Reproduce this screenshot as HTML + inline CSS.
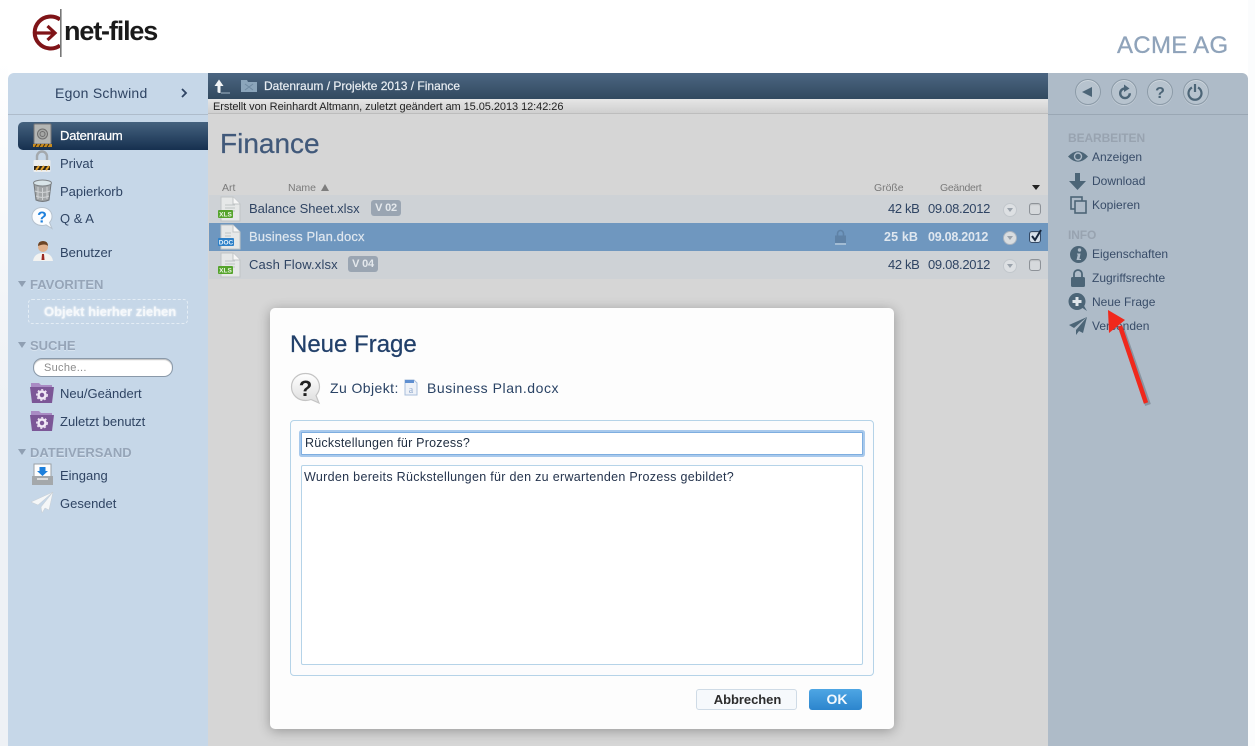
<!DOCTYPE html>
<html><head><meta charset="utf-8"><style>
html,body{margin:0;padding:0;width:1255px;height:746px;overflow:hidden;background:#fff;font-family:"Liberation Sans",sans-serif;}
div,span,svg{position:absolute;}
.t{white-space:nowrap;color:#2f4463;font-size:13px;line-height:16px;}
.h{white-space:nowrap;color:#96a5b8;font-size:13px;font-weight:bold;line-height:16px;text-shadow:0 1px 0 rgba(255,255,255,.3);}
.r{white-space:nowrap;color:#384c68;font-size:12px;line-height:14px;}
.rh{white-space:nowrap;color:#98a3b0;font-size:12px;font-weight:bold;line-height:14px;letter-spacing:-.1px;}
.row{left:209px;width:839px;height:28px;background:#ced2d6;}
.tri{width:0;height:0;border-left:4px solid transparent;border-right:4px solid transparent;border-top:6px solid #8f9fb2;left:18px;}
.cb{left:1029px;width:10px;height:10px;border:1px solid #8d9298;border-radius:3px;background:#d6d9dc;box-shadow:inset 0 1px 1px rgba(0,0,0,.12);}
.rd{left:1003px;width:12px;height:12px;border-radius:50%;background:#dde0e3;border:1px solid #c2c7cc;}
.rd:after{content:"";position:absolute;left:3px;top:4px;border-left:3px solid transparent;border-right:3px solid transparent;border-top:4px solid #9aa2ab;}
.cir{top:79px;width:24px;height:24px;border-radius:50%;background:#b7c3ce;border:1px solid #8b9aa7;box-shadow:inset 0 1px 0 rgba(255,255,255,.35),0 1px 0 rgba(255,255,255,.25);}
.lab{white-space:nowrap;font-size:10.500px;line-height:12px;color:#7a7a7a;top:182px;}
.ver{height:16px;background:#9aa5b2;border-radius:3px;color:#e4e8ec;font-size:11px;font-weight:bold;line-height:17px;text-align:center;white-space:nowrap;letter-spacing:-.2px;}
</style></head><body>

<!-- logo -->
<svg style="left:30px;top:8px" width="40" height="52" viewBox="0 0 40 52">
<path d="M30 11.500A16 16 0 1 0 30 37.500" fill="none" stroke="#7f1418" stroke-width="4"/>
<path d="M5 25H24M17.500 18L25 25L17.500 32" fill="none" stroke="#7f1418" stroke-width="3.200"/>
<rect x="30" y="1" width="1.600" height="48" fill="#777"/>
</svg>
<div style="left:64px;top:14px;font-size:27px;line-height:34px;font-weight:bold;color:#1a1a1a;letter-spacing:-1.150px;white-space:nowrap">net-files</div>
<div style="left:1117px;top:32px;font-size:24px;line-height:28px;color:#8fa3ba;white-space:nowrap;letter-spacing:.3px;-webkit-text-stroke:.3px #8fa3ba">ACME AG</div>

<!-- panels -->
<div style="left:8px;top:73px;width:200px;height:673px;background:#c6d7e8;border-top-left-radius:6px"></div>
<div style="left:8px;top:114px;width:200px;height:1px;background:#aebccb"></div>
<div style="left:208px;top:99px;width:840px;height:647px;background:#d6d6d6"></div>
<div style="left:1048px;top:73px;width:200px;height:673px;background:#aebbc8;border-top-right-radius:6px"></div>
<div style="left:1048px;top:114px;width:200px;height:1px;background:#9aa7b4"></div>
<div style="left:208px;top:73px;width:840px;height:26px;background:linear-gradient(#4c6682,#32495f)"></div>
<div style="left:208px;top:99px;width:840px;height:15px;background:linear-gradient(#e6e6e6,#cfcfcf);border-bottom:1px solid #bdbdbd;box-sizing:border-box"></div>

<!-- path bar -->
<svg style="left:213px;top:78px" width="18" height="17" viewBox="0 0 18 17"><path d="M16 15H7.500V8H10.500L6 1.500L1.500 8H4.500V14Q5 15 7.500 15" fill="#f2f4f6"/><path d="M8 15H17" stroke="#7e93a6" stroke-width="1.500"/></svg>
<svg style="left:241px;top:79px" width="17" height="14" viewBox="0 0 17 14"><path d="M0 1H6L7 3H16V13H0Z" fill="#8ba5bb"/><path d="M4 5L12 11M12 5L4 11" stroke="#6f8aa2"/></svg>
<div class="t" style="left:264px;top:78px;color:#e9eef3;font-size:12px;-webkit-text-stroke:.2px #e9eef3">Datenraum / Projekte 2013 / Finance</div>
<div class="t" style="left:213px;top:100px;color:#222;font-size:11px;line-height:15px;letter-spacing:-.06px">Erstellt von Reinhardt Altmann, zuletzt geändert am 15.05.2013 12:42:26</div>

<!-- left -->
<div class="t" style="left:55px;top:85px;font-size:14px;color:#2f4463;letter-spacing:.25px">Egon Schwind</div>
<svg style="left:180px;top:88px" width="8" height="10" viewBox="0 0 8 10"><path d="M2 1L6 5L2 9" fill="none" stroke="#2f4463" stroke-width="1.800"/></svg>

<div style="left:18px;top:122px;width:190px;height:28px;border-radius:5px 0 0 5px;background:linear-gradient(#45627f,#16304f)"></div>
<svg style="left:33px;top:123px" width="19" height="26" viewBox="0 0 19 26"><rect x="1" y="1" width="17" height="20" rx="1" fill="#b4b6b4" stroke="#777"/><circle cx="9.500" cy="11" r="5" fill="#a5a7a5" stroke="#6e6e6e"/><circle cx="9.500" cy="11" r="2.500" fill="none" stroke="#6e6e6e"/><rect x="0" y="21" width="19" height="3" fill="#c98c1e"/><path d="M2 24L4 21M6 24L8 21M10 24L12 21M14 24L16 21" stroke="#33281a"/></svg>
<div class="t" style="left:60px;top:128px;color:#fff;font-size:13px;letter-spacing:-.2px;-webkit-text-stroke:.25px #fff">Datenraum</div>

<svg style="left:32px;top:150px" width="20" height="24" viewBox="0 0 20 24"><path d="M5 11V6.500a5 5 0 0 1 10 0V11" fill="none" stroke="#a4a9ad" stroke-width="2.400"/><rect x="1.500" y="10" width="17" height="12" rx="1" fill="#eceded"/><rect x="2" y="16" width="16" height="4" fill="#2b2318"/><path d="M4 20L7 16M9 20L12 16M14 20L17 16" stroke="#e2a02a" stroke-width="2"/></svg>
<div class="t" style="left:60px;top:156px">Privat</div>

<svg style="left:32px;top:179px" width="21" height="24" viewBox="0 0 21 24"><path d="M2 5L4 21Q10.500 24 17 21L19 5Q10.500 9 2 5Z" fill="#a2a6a8" stroke="#73777a"/><path d="M6 8V20M10.500 9V21M15 8V20M3 12Q10.500 15 18 12M4 17Q10.500 20 17 17" stroke="#d0d3d5" fill="none"/><ellipse cx="10.500" cy="4" rx="9" ry="3" fill="#d8e4e8" stroke="#7f8488"/></svg>
<div class="t" style="left:60px;top:184px">Papierkorb</div>

<svg style="left:31px;top:206px" width="23" height="24" viewBox="0 0 23 24"><path d="M11 1.500C5 1.500 1 5.500 1 10.500C1 16 5.500 19.500 11 19.500C12.500 19.500 14 19.200 15 18.800L21 22.500L18.500 16.500C20 15 21 13 21 10.500C21 5.500 17 1.500 11 1.500Z" fill="#fbfdff" stroke="#b6c2ce"/><text x="11" y="16.500" font-family="Liberation Sans" font-size="16" font-weight="bold" fill="#1c7fdc" text-anchor="middle">?</text></svg>
<div class="t" style="left:60px;top:211px">Q &amp; A</div>

<svg style="left:32px;top:239px" width="22" height="24" viewBox="0 0 22 24"><path d="M1 22Q2 15 9 14H13Q20 15 21 22Z" fill="#f3f3f1"/><path d="M10 15H12L12.500 21H9.500Z" fill="#9b2a24"/><circle cx="11" cy="8" r="5" fill="#e0b18d"/><path d="M6 7Q6 2 11 2Q16 2 16 7Q13 4 6 7Z" fill="#6c4526"/></svg>
<div class="t" style="left:60px;top:245px">Benutzer</div>

<div class="tri" style="top:281px"></div>
<div class="h" style="left:30px;top:277px">FAVORITEN</div>
<div style="left:28px;top:299px;width:158px;height:23px;border:1px dashed #e4edf5;border-radius:4px"></div>
<div class="t" style="left:44px;top:304px;color:#f5f8fb;font-weight:bold;text-shadow:0 0 2px #fff">Objekt hierher ziehen</div>

<div class="tri" style="top:342px"></div>
<div class="h" style="left:30px;top:338px">SUCHE</div>
<div style="left:33px;top:358px;width:138px;height:17px;border:1px solid #8a99a9;border-radius:9px;background:#fff;box-shadow:inset 0 1px 1px #bbb"></div>
<div class="t" style="left:44px;top:360px;color:#8c8c8c;font-size:11px;letter-spacing:.3px">Suche...</div>

<svg style="left:30px;top:381px" width="24" height="23" viewBox="0 0 24 23"><path d="M1 2H9L11 4H22V8H1Z" fill="#a98bc4"/><path d="M0 6H24L22 22H2Z" fill="#7c5797"/><circle cx="12" cy="14" r="3.500" fill="none" stroke="#f1e9f6" stroke-width="2.500"/><circle cx="12" cy="14" r="5.300" fill="none" stroke="#f1e9f6" stroke-width="1.200" stroke-dasharray="2 2"/></svg>
<div class="t" style="left:60px;top:386px">Neu/Geändert</div>
<svg style="left:30px;top:409px" width="24" height="23" viewBox="0 0 24 23"><path d="M1 2H9L11 4H22V8H1Z" fill="#a98bc4"/><path d="M0 6H24L22 22H2Z" fill="#7c5797"/><circle cx="12" cy="14" r="3.500" fill="none" stroke="#f1e9f6" stroke-width="2.500"/><circle cx="12" cy="14" r="5.300" fill="none" stroke="#f1e9f6" stroke-width="1.200" stroke-dasharray="2 2"/></svg>
<div class="t" style="left:60px;top:414px">Zuletzt benutzt</div>

<div class="tri" style="top:449px"></div>
<div class="h" style="left:30px;top:445px">DATEIVERSAND</div>
<svg style="left:32px;top:463px" width="21" height="23" viewBox="0 0 21 23"><rect x="2" y="1" width="17" height="14" fill="#fdfdfd" stroke="#9ba1a6"/><path d="M7.500 4H13.500V8H16L10.500 13L5 8H7.500Z" fill="#1c7fdc"/><path d="M0 13H21V22H0Z" fill="#a4a8ab"/><path d="M5 16H16" stroke="#dcdcdc" stroke-width="2"/></svg>
<div class="t" style="left:60px;top:468px">Eingang</div>
<svg style="left:31px;top:491px" width="23" height="23" viewBox="0 0 23 23"><path d="M22 1L0 11L7 14L22 1L10 16L11 22L14 17L18 19Z" fill="#f5f7f8" stroke="#c8ced3" stroke-width=".5"/></svg>
<div class="t" style="left:60px;top:496px">Gesendet</div>

<!-- center -->
<div style="left:220px;top:127px;font-size:28px;line-height:34px;color:#41597a;white-space:nowrap;-webkit-text-stroke:.25px #41597a">Finance</div>
<div class="lab" style="left:222px">Art</div>
<div class="lab" style="left:288px">Name</div>
<div style="left:321px;top:184px;width:0;height:0;border-left:4px solid transparent;border-right:4px solid transparent;border-bottom:7px solid #7d7d7d"></div>
<div class="lab" style="left:874px;letter-spacing:-.05px">Größe</div>
<div class="lab" style="left:940px;letter-spacing:-.3px">Geändert</div>
<div style="left:1032px;top:185px;width:0;height:0;border-left:4.500px solid transparent;border-right:4.500px solid transparent;border-top:5px solid #222"></div>

<div class="row" style="top:195px"></div>
<div class="row" style="top:223px;background:#6f97bf"></div>
<div class="row" style="top:251px"></div>

<svg style="left:217px;top:196px" width="24" height="26" viewBox="0 0 24 26"><path d="M4 1H16L23 8V25H4Z" fill="#e6e8e8" stroke="#c0c4c6"/><path d="M16 1V8H23" fill="#f7f7f7" stroke="#c0c4c6"/><path d="M8 9H18M8 12H18M8 15H18" stroke="#bfc3c5"/><rect x="1" y="14" width="15" height="8" rx="1" fill="#55a42c"/><text x="8.500" y="20.500" font-family="Liberation Sans" font-size="6.500" font-weight="bold" fill="#eef7e6" text-anchor="middle">XLS</text></svg>
<svg style="left:217px;top:224px" width="24" height="26" viewBox="0 0 24 26"><path d="M4 1H16L23 8V25H4Z" fill="#e6e8e8" stroke="#c0c4c6"/><path d="M16 1V8H23" fill="#f7f7f7" stroke="#c0c4c6"/><path d="M8 9H14M8 12H14" stroke="#bfc3c5"/><rect x="1" y="14" width="16" height="8" rx="1" fill="#2d80c8"/><text x="9" y="20.500" font-family="Liberation Sans" font-size="6.500" font-weight="bold" fill="#e8f3fb" text-anchor="middle">DOC</text></svg>
<svg style="left:217px;top:252px" width="24" height="26" viewBox="0 0 24 26"><path d="M4 1H16L23 8V25H4Z" fill="#e6e8e8" stroke="#c0c4c6"/><path d="M16 1V8H23" fill="#f7f7f7" stroke="#c0c4c6"/><path d="M8 9H18M8 12H18M8 15H18" stroke="#bfc3c5"/><rect x="1" y="14" width="15" height="8" rx="1" fill="#55a42c"/><text x="8.500" y="20.500" font-family="Liberation Sans" font-size="6.500" font-weight="bold" fill="#eef7e6" text-anchor="middle">XLS</text></svg>

<div class="t" style="left:249px;top:201px">Balance Sheet.xlsx</div>
<div class="ver" style="left:371px;top:200px;width:30px">V 02</div>
<div class="t" style="left:249px;top:229px;color:#dfe7ef;letter-spacing:.12px;-webkit-text-stroke:.2px #dfe7ef">Business Plan.docx</div>
<div class="t" style="left:249px;top:257px;letter-spacing:.15px">Cash Flow.xlsx</div>
<div class="ver" style="left:348px;top:256px;width:30px">V 04</div>

<svg style="left:834px;top:229px" width="13" height="16" viewBox="0 0 13 16"><path d="M3.500 7V4.500a3 3 0 0 1 6 0V7" fill="none" stroke="#5f82a6" stroke-width="1.600"/><rect x="1" y="6.500" width="11" height="7.500" fill="#5f82a6"/><rect x="1" y="14.500" width="11" height="1" fill="#d5e0ea"/></svg>

<div class="t" style="left:888px;top:201px;letter-spacing:-.35px">42 kB</div>
<div class="t" style="left:928px;top:201px;letter-spacing:-.3px">09.08.2012</div>
<div class="t" style="left:884px;top:229px;color:#dfe7ef;font-weight:bold;font-size:12.500px;letter-spacing:.15px">25 kB</div>
<div class="t" style="left:928px;top:229px;color:#dfe7ef;font-weight:bold;font-size:12.500px;letter-spacing:-.25px">09.08.2012</div>
<div class="t" style="left:888px;top:257px;letter-spacing:-.35px">42 kB</div>
<div class="t" style="left:928px;top:257px;letter-spacing:-.3px">09.08.2012</div>

<div class="rd" style="top:203px"></div>
<div class="rd" style="top:231px;background:#d9dde0;border-color:#aab4bf"></div>
<div class="rd" style="top:259px"></div>
<div class="cb" style="top:203px"></div>
<div class="cb" style="top:231px;background:#d8e2ec;border-color:#344a66"></div>
<div class="cb" style="top:259px"></div>
<svg style="left:1029px;top:228px" width="15" height="15" viewBox="0 0 15 15"><path d="M3 8L6 12L12 2" fill="none" stroke="#16263c" stroke-width="2"/></svg>

<!-- right -->
<div class="cir" style="left:1075px"></div>
<div class="cir" style="left:1111px"></div>
<div class="cir" style="left:1147px"></div>
<div class="cir" style="left:1183px"></div>
<svg style="left:1075px;top:79px" width="136" height="26" viewBox="0 0 136 26">
<path d="M7 13L17 8V18Z" fill="#4c6577"/>
<path d="M50 9.500a4.800 4.800 0 1 0 4.800 4.800" fill="none" stroke="#4c6577" stroke-width="2.400"/><path d="M49 5.500L54.500 9.500L49 13Z" fill="#4c6577"/>
<text x="85" y="19" font-family="Liberation Sans" font-size="16" font-weight="bold" fill="#4c6577" text-anchor="middle">?</text>
<path d="M117 8.500a6.500 6.500 0 1 0 6 0" fill="none" stroke="#4c6577" stroke-width="2.200"/><path d="M120 5V13" stroke="#4c6577" stroke-width="2.200"/>
</svg>

<div class="rh" style="left:1068px;top:131px">BEARBEITEN</div>
<svg style="left:1068px;top:149px" width="20" height="15" viewBox="0 0 20 15"><path d="M0 7.500Q10 -3 20 7.500Q10 18 0 7.500Z" fill="#4c6577"/><circle cx="10" cy="7.500" r="4.200" fill="#aebbc8"/><circle cx="10" cy="7.500" r="2.800" fill="#4c6577"/></svg>
<div class="r" style="left:1092px;top:150px">Anzeigen</div>
<svg style="left:1069px;top:173px" width="18" height="17" viewBox="0 0 18 17"><path d="M6 0H11V8H17L8.500 17L0 8H6Z" fill="#4c6577"/></svg>
<div class="r" style="left:1092px;top:174px">Download</div>
<svg style="left:1070px;top:196px" width="17" height="18" viewBox="0 0 17 18"><rect x="1" y="1" width="11" height="12" fill="none" stroke="#4c6577" stroke-width="1.600"/><rect x="5" y="5" width="11" height="12" fill="#aebbc8" stroke="#4c6577" stroke-width="1.600"/></svg>
<div class="r" style="left:1092px;top:198px">Kopieren</div>

<div class="rh" style="left:1068px;top:228px">INFO</div>
<svg style="left:1070px;top:246px" width="17" height="17" viewBox="0 0 17 17"><circle cx="8.500" cy="8.500" r="8.500" fill="#4c6577"/><circle cx="9.500" cy="4" r="1.700" fill="#aebbc8"/><path d="M7 7.500H10.500L9.500 13H11V14H6.500L7.800 8.500H7Z" fill="#aebbc8"/></svg>
<div class="r" style="left:1092px;top:247px">Eigenschaften</div>
<svg style="left:1070px;top:269px" width="16" height="18" viewBox="0 0 16 18"><path d="M4 8V5a4 4 0 0 1 8 0V8" fill="none" stroke="#4c6577" stroke-width="1.800"/><rect x="1" y="8" width="14" height="10" rx="1.500" fill="#4c6577"/></svg>
<div class="r" style="left:1092px;top:271px">Zugriffsrechte</div>
<svg style="left:1068px;top:293px" width="20" height="19" viewBox="0 0 20 19"><circle cx="9" cy="8.500" r="8.500" fill="#4c6577"/><path d="M13 14L19 18L15 11Z" fill="#4c6577"/><path d="M7.500 4H10.500V7H13.500V10H10.500V13H7.500V10H4.500V7H7.500Z" fill="#dfe5ea"/></svg>
<div class="r" style="left:1092px;top:295px">Neue Frage</div>
<svg style="left:1069px;top:317px" width="18" height="18" viewBox="0 0 18 18"><path d="M18 0L0 8L5 11L18 0L7 13L7 18L10 14L14 16Z" fill="#4c6577"/></svg>
<div class="r" style="left:1092px;top:319px">Versenden</div>

<!-- dialog -->
<div style="left:270px;top:308px;width:624px;height:421px;background:#fdfdfd;border-radius:5px;box-shadow:0 2px 12px rgba(0,0,0,.3)"></div>
<div style="left:290px;top:330px;font-size:24px;line-height:29px;color:#22406a;white-space:nowrap;-webkit-text-stroke:.25px #22406a">Neue Frage</div>
<svg style="left:290px;top:372px" width="33" height="33" viewBox="0 0 33 33"><defs><linearGradient id="qg" x1="0" y1="0" x2="0" y2="1"><stop offset="0" stop-color="#ffffff"/><stop offset="1" stop-color="#dedede"/></linearGradient></defs><path d="M15.500 1.500C7 1.500 1.500 7.500 1.500 15C1.500 23 8 28.500 15.500 28.500C17.500 28.500 19.500 28.100 21 27.500L29 31L26 23.500C28 21 29.500 18.500 29.500 15C29.500 7.500 24 1.500 15.500 1.500Z" fill="url(#qg)" stroke="#c4c4c4" stroke-width="1.200"/><text x="15.500" y="24" font-family="Liberation Sans" font-size="22" font-weight="bold" fill="#222" text-anchor="middle">?</text></svg>
<div class="t" style="left:330px;top:380px;font-size:14px;color:#2a4365;letter-spacing:.42px">Zu Objekt:</div>
<svg style="left:404px;top:379px" width="14" height="17" viewBox="0 0 14 17"><path d="M1 1H10L13 4V16H1Z" fill="#eef2f8" stroke="#a9bfdc"/><rect x="1" y="1" width="9" height="3" fill="#5f8fd0"/><text x="7" y="14" font-family="Liberation Serif" font-size="10" fill="#8fa8cc" text-anchor="middle">a</text></svg>
<div class="t" style="left:427px;top:380px;font-size:14px;color:#2a4365;letter-spacing:.55px">Business Plan.docx</div>

<div style="left:290px;top:420px;width:582px;height:254px;border:1px solid #b5d3e8;border-radius:4px;background:#fcfcfd"></div>
<div style="left:301px;top:432px;width:560px;height:21px;border:1px solid #7eaee0;background:#fff;box-shadow:0 0 0 2px #a8c9ec;border-radius:1px"></div>
<div class="t" style="left:305px;top:435px;font-size:12.500px;color:#1f2d40;letter-spacing:.22px">Rückstellungen für Prozess?</div>
<div style="left:301px;top:465px;width:560px;height:198px;border:1px solid #b5d3e8;background:#fff;border-radius:2px"></div>
<div class="t" style="left:304px;top:469px;font-size:12.500px;color:#25344d;letter-spacing:.31px">Wurden bereits Rückstellungen für den zu erwartenden Prozess gebildet?</div>

<div style="left:696px;top:689px;width:99px;height:19px;border:1px solid #cfdbe6;border-radius:3px;background:#f6f9fc;color:#2c2c2c;font-size:13px;font-weight:bold;line-height:19px;text-indent:2px;text-align:center;letter-spacing:-.05px">Abbrechen</div>
<div style="left:809px;top:689px;width:53px;height:21px;border-radius:3px;background:linear-gradient(#4ea6e4,#2c85cd);color:#f2f8fd;font-size:14px;font-weight:bold;line-height:21px;text-indent:3px;text-align:center">OK</div>

<!-- red arrow -->
<svg style="left:1100px;top:302px" width="60" height="112" viewBox="0 0 60 112">
<path d="M48 103L22 28" stroke="#5d6670" stroke-opacity=".45" stroke-width="6"/>
<path d="M46 101L20 24" stroke="#f0281c" stroke-width="4.500"/>
<path d="M8 8L9 31L25 18Z" fill="#f0281c"/>
</svg>

<div style="left:0;top:0;width:8px;height:746px;background:linear-gradient(#fff 0,#fff 60px,#eef1f5 400px,#eef1f5 100%)"></div>
<div style="left:1248px;top:0;width:7px;height:746px;background:#fbfcfd"></div>
</body></html>
